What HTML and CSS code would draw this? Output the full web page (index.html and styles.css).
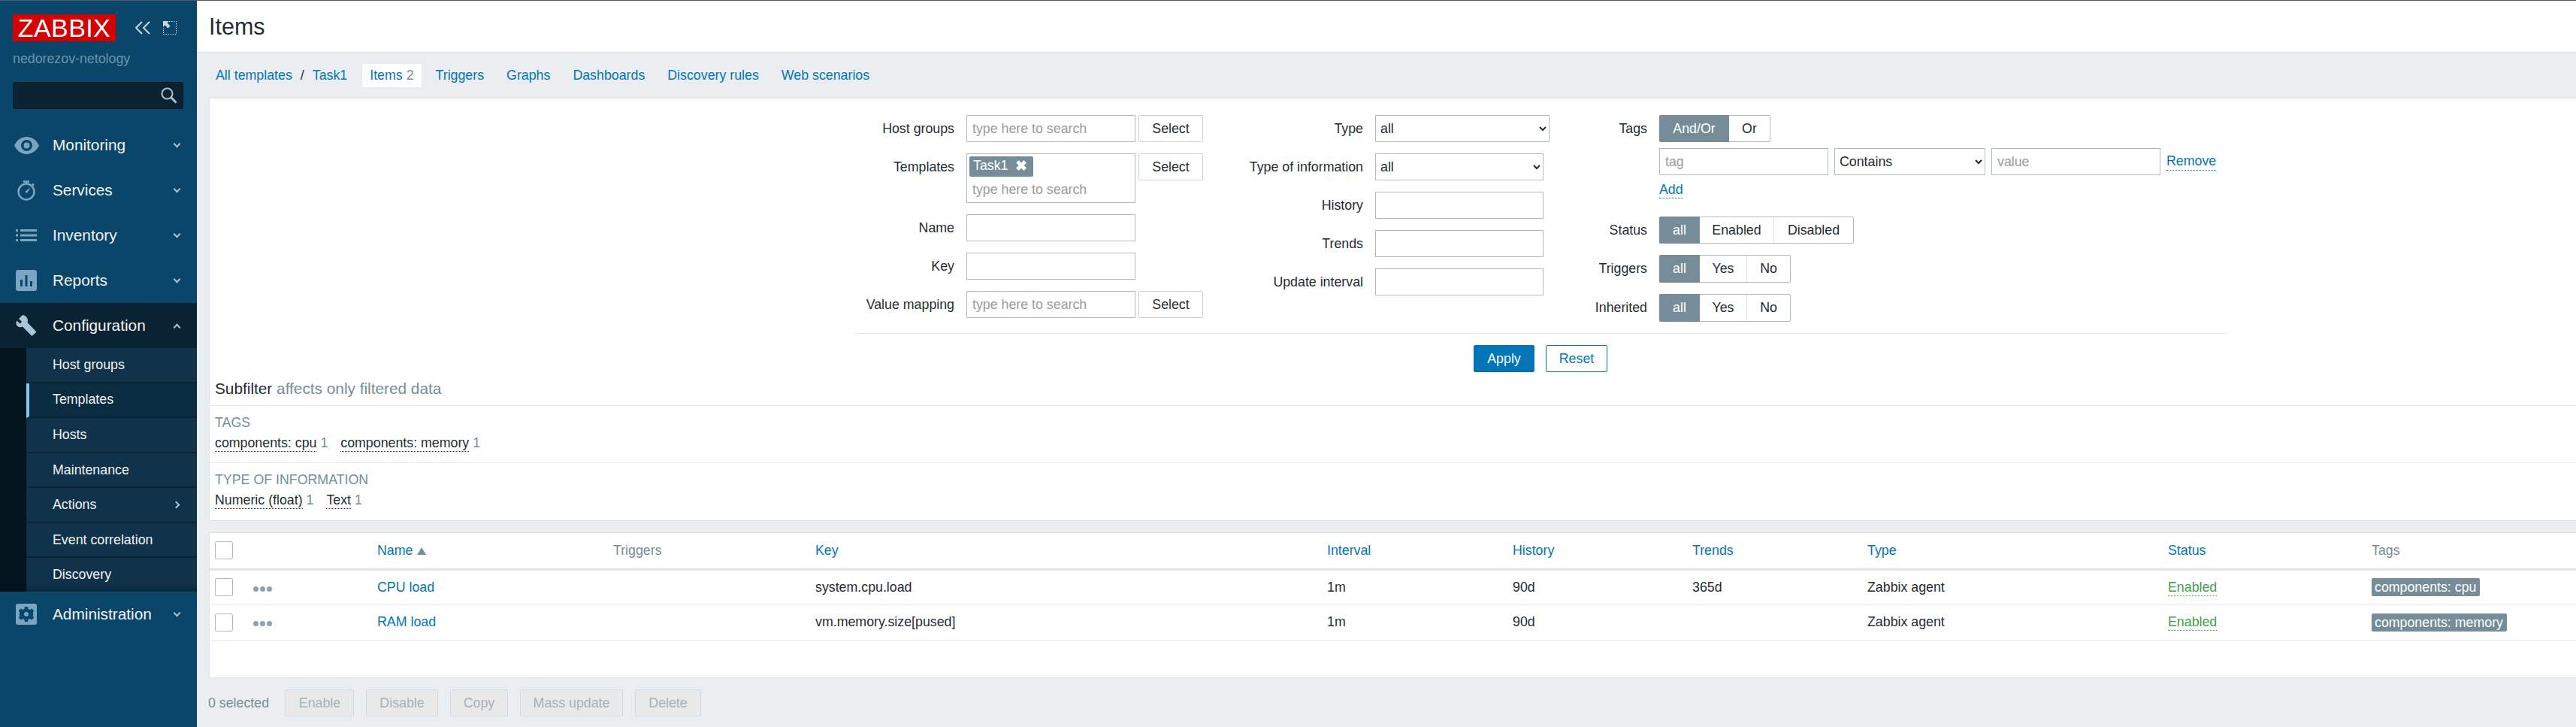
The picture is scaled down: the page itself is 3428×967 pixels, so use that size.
FILE: index.html
```html
<!DOCTYPE html>
<html lang="en">
<head>
  <meta charset="utf-8">
  <title>Items</title>
  <link rel="stylesheet" href="styles.css">
</head>
<body>
  <div class="topline"></div>
  <div class="page">
    <aside class="sidebar">
      <div class="brand">
        <div class="logo">ZABBIX</div>
        <svg class="collapse" width="21" height="18" viewBox="0 0 21 18"><path d="M10 1 2 9l8 8M20 1l-8 8 8 8" fill="none" stroke="#c4d6e2" stroke-width="2"/></svg>
        <svg class="expand" width="18" height="18" viewBox="0 0 18 18"><path d="M8 .5h9.500v17H.5V9" fill="none" stroke="#c4d6e2" stroke-dasharray="1.500 1.500"/><path d="M0 0h8L5.500 2.500 9.500 6.500 6.500 9.500 2.500 5.500 0 8z" fill="#c4d6e2"/></svg>
      </div>
      <div class="server">nedorezov-netology</div>
      <div class="search">
        <input type="text" class="search-input">
        <svg class="search-icon" width="22" height="22" viewBox="0 0 22 22"><circle cx="8.500" cy="8.500" r="7" fill="none" stroke="#a9c0ce" stroke-width="2"/><path d="m13.500 13.500 7 7" stroke="#a9c0ce" stroke-width="3"/></svg>
      </div>
      <nav>
        <a class="nav-item">
          <span class="nav-icon"><svg width="33" height="23" viewBox="0 0 33 23"><path fill-rule="evenodd" d="M16.500 0C24 0 30 5 33 11.500 30 18 24 23 16.500 23S3 18 0 11.500C3 5 9 0 16.500 0zm0 4a7.500 7.500 0 1 0 0 15 7.500 7.500 0 0 0 0-15zm0 3.500a4 4 0 1 1 0 8 4 4 0 0 1 0-8z" fill="#7ba5bf"/></svg></span>
          <span class="nav-label">Monitoring</span><i class="chev"></i>
        </a>
        <a class="nav-item">
          <span class="nav-icon"><svg width="24" height="27" viewBox="0 0 24 27"><g fill="none" stroke="#7ba5bf" stroke-width="2.500"><circle cx="12" cy="15" r="10.500"/><path d="M8 1.500h8M12 1.500v3M20 4.500l2 2"/></g><path d="m18 9-5 8-3-2z" fill="#7ba5bf"/></svg></span>
          <span class="nav-label">Services</span><i class="chev"></i>
        </a>
        <a class="nav-item">
          <span class="nav-icon"><svg width="28" height="16" viewBox="0 0 28 16"><path d="M0 0h3v3H0zM0 6.500h3v3H0zM0 13h3v3H0zM6 0h22v3H6zM6 6.500h22v3H6zM6 13h22v3H6z" fill="#7ba5bf"/></svg></span>
          <span class="nav-label">Inventory</span><i class="chev"></i>
        </a>
        <a class="nav-item">
          <span class="nav-icon"><svg width="28" height="28" viewBox="0 0 28 28"><path fill-rule="evenodd" d="M3 0h22a3 3 0 0 1 3 3v22a3 3 0 0 1-3 3H3a3 3 0 0 1-3-3V3a3 3 0 0 1 3-3zm3 13v9h3v-9zm6.500-6v15h3V7zM19 15v7h3v-7z" fill="#7ba5bf"/></svg></span>
          <span class="nav-label">Reports</span><i class="chev"></i>
        </a>
        <a class="nav-item active">
          <span class="nav-icon"><svg width="28" height="28" viewBox="0 0 28 28"><path d="M9 0 4 5l4 4-2.500 2.500-4-4C0 10 0 13 2.500 15c2 1.500 4.500 1.500 6.500.5L21.500 28l6-5.500L15.500 10c1-2.500.5-5-1.500-7.500C12.500 1 11 .3 9 0z" fill="#a9c6d8"/></svg></span>
          <span class="nav-label">Configuration</span><i class="chev up"></i>
        </a>
        <ul class="submenu">
          <li class="sub-item">Host groups</li>
          <li class="sub-item selected">Templates</li>
          <li class="sub-item">Hosts</li>
          <li class="sub-item">Maintenance</li>
          <li class="sub-item">Actions<i class="chev right"></i></li>
          <li class="sub-item">Event correlation</li>
          <li class="sub-item last">Discovery</li>
        </ul>
        <a class="nav-item">
          <span class="nav-icon"><svg width="28" height="28" viewBox="0 0 28 28"><rect width="28" height="28" rx="3" fill="#7ba5bf"/><path fill-rule="evenodd" d="M12 4h4l.6 3 2.200 1 2.600-1.600 2.800 2.800L22.600 12l.9 2-.9 2 1.600 2.800-2.800 2.800-2.600-1.600-2.200 1-.6 3h-4l-.6-3-2.200-1-2.600 1.600-2.800-2.800L5.400 16l-.9-2 .9-2-1.600-2.800 2.800-2.800L9.200 8l2.200-1zm2 7a3 3 0 1 0 0 6 3 3 0 0 0 0-6z" fill="#0a466a"/></svg></span>
          <span class="nav-label">Administration</span><i class="chev"></i>
        </a>
      </nav>
    </aside>

    <main class="content">
      <header class="page-head"><h1>Items</h1></header>

      <div class="subnav">
        <a class="crumb">All templates</a>
        <span class="crumb-sep">/</span>
        <a class="crumb">Task1</a>
        <a class="tab current">Items <span class="count">2</span></a>
        <a class="tab">Triggers</a>
        <a class="tab">Graphs</a>
        <a class="tab">Dashboards</a>
        <a class="tab">Discovery rules</a>
        <a class="tab">Web scenarios</a>
      </div>

      <section class="box filter">
        <div class="filter-form">
          <div class="filter-col col-a">
            <label>Host groups</label>
            <div class="multi"><input class="field" placeholder="type here to search"><button class="btn-select">Select</button></div>
            <label>Templates</label>
            <div class="multi">
              <div class="field picker">
                <span class="chip">Task1 <b class="chip-x">✖</b></span>
                <span class="hint">type here to search</span>
              </div>
              <button class="btn-select">Select</button>
            </div>
            <label>Name</label>
            <div class="multi"><input class="field"></div>
            <label>Key</label>
            <div class="multi"><input class="field"></div>
            <label>Value mapping</label>
            <div class="multi"><input class="field" placeholder="type here to search"><button class="btn-select">Select</button></div>
          </div>

          <div class="filter-col col-b">
            <label>Type</label>
            <select class="field wide"><option>all</option></select>
            <label>Type of information</label>
            <select class="field narrow"><option>all</option></select>
            <label>History</label>
            <input class="field narrow">
            <label>Trends</label>
            <input class="field narrow">
            <label>Update interval</label>
            <input class="field narrow">
          </div>

          <div class="filter-col col-c">
            <label>Tags</label>
            <div class="radio"><span class="on seg-andor">And/Or</span><span class="seg-or">Or</span></div>
            <span></span>
            <div class="tag-row">
              <input class="field tag-in" placeholder="tag">
              <select class="field tag-op"><option>Contains</option></select>
              <input class="field tag-in" placeholder="value">
              <a class="dotted">Remove</a>
            </div>
            <span></span>
            <div class="add-row"><a class="dotted">Add</a></div>
            <label>Status</label>
            <div class="radio"><span class="on seg-all">all</span><span class="seg-en">Enabled</span><span class="seg-dis">Disabled</span></div>
            <label>Triggers</label>
            <div class="radio tall"><span class="on seg-all">all</span><span class="seg-yes">Yes</span><span class="seg-no">No</span></div>
            <label>Inherited</label>
            <div class="radio tall"><span class="on seg-all">all</span><span class="seg-yes">Yes</span><span class="seg-no">No</span></div>
          </div>
        </div>
        <div class="filter-actions">
          <button class="btn-apply">Apply</button>
          <button class="btn-reset">Reset</button>
        </div>

        <div class="sub-head">Subfilter <span class="muted">affects only filtered data</span></div>
        <div class="sub-group">
          <div class="sub-title">TAGS</div>
          <div class="sub-values"><span><a class="dotted dark">components: cpu</a> <span class="muted">1</span></span><span><a class="dotted dark">components: memory</a> <span class="muted">1</span></span></div>
        </div>
        <div class="sub-group end">
          <div class="sub-title">TYPE OF INFORMATION</div>
          <div class="sub-values"><span><a class="dotted dark">Numeric (float)</a> <span class="muted">1</span></span><span><a class="dotted dark">Text</a> <span class="muted">1</span></span></div>
        </div>
      </section>

      <section class="box listing">
        <table class="items">
          <colgroup>
            <col class="c-check"><col class="c-dots"><col class="c-name"><col class="c-trig"><col class="c-key"><col class="c-int"><col class="c-hist"><col class="c-trend"><col class="c-type"><col class="c-stat"><col class="c-tags">
          </colgroup>
          <thead>
            <tr>
              <th><span class="check"></span></th>
              <th></th>
              <th><a>Name</a> <span class="sort"></span></th>
              <th class="plain">Triggers</th>
              <th><a>Key</a></th>
              <th><a>Interval</a></th>
              <th><a>History</a></th>
              <th><a>Trends</a></th>
              <th><a>Type</a></th>
              <th><a>Status</a></th>
              <th class="plain">Tags</th>
            </tr>
          </thead>
          <tbody>
            <tr>
              <td><span class="check"></span></td>
              <td><span class="dots"><i></i><i></i><i></i></span></td>
              <td><a>CPU load</a></td>
              <td></td>
              <td>system.cpu.load</td>
              <td>1m</td>
              <td>90d</td>
              <td>365d</td>
              <td>Zabbix agent</td>
              <td><a class="dotted green">Enabled</a></td>
              <td><span class="tag">components: cpu</span></td>
            </tr>
            <tr>
              <td><span class="check"></span></td>
              <td><span class="dots"><i></i><i></i><i></i></span></td>
              <td><a>RAM load</a></td>
              <td></td>
              <td>vm.memory.size[pused]</td>
              <td>1m</td>
              <td>90d</td>
              <td></td>
              <td>Zabbix agent</td>
              <td><a class="dotted green">Enabled</a></td>
              <td><span class="tag">components: memory</span></td>
            </tr>
          </tbody>
        </table>
      </section>

      <footer class="actions">
        <span class="selected-count">0 selected</span>
        <button disabled class="act-enable">Enable</button>
        <button disabled class="act-disable">Disable</button>
        <button disabled class="act-copy">Copy</button>
        <button disabled class="act-mass">Mass update</button>
        <button disabled class="act-delete">Delete</button>
      </footer>
    </main>
  </div>
</body>
</html>
```

FILE: styles.css
```css
* { box-sizing: border-box; }

html, body {
  margin: 0;
  height: 967px;
  overflow: hidden;
}
body {
  background: #ebeef0;
  color: #1f2c33;
  font: 17.8px "Liberation Sans", Arial, sans-serif;
}
a { color: #0275b8; }
button, input, select { font: inherit; color: inherit; }

.topline { height: 1px; background: #555b5f; }
.page { display: flex; height: 966px; }

/* sidebar */
.sidebar {
  width: 262px;
  flex: none;
  background: #0a466a;
  color: #f2f2f2;
}
.brand {
  display: flex;
  align-items: center;
  height: 36px;
  margin: 18px 0 0 17px;
}
.logo {
  width: 137px;
  height: 36px;
  background: #d40000;
  color: #fff;
  font-size: 34px;
  line-height: 37px;
  letter-spacing: .4px;
  text-align: center;
}
.collapse { margin-left: 25px; }
.expand { margin-left: 17px; }
.server {
  margin: 13px 0 0 17px;
  height: 20px;
  line-height: 20px;
  color: #6f93ab;
}
.search {
  position: relative;
  margin: 21px 18px 0 17px;
  height: 36px;
}
.search-input {
  width: 100%;
  height: 36px;
  background: #0a2332;
  border: 1px solid #051824;
  border-radius: 3px;
}
.search-icon { position: absolute; top: 7px; right: 8px; }

nav { margin-top: 18px; }
.nav-item {
  display: flex;
  align-items: center;
  height: 60px;
  color: #f2f2f2;
  font-size: 20.8px;
  padding-right: 23px;
}
.nav-item.active { background: #0a2332; }
.nav-icon {
  width: 70px;
  flex: none;
  display: flex;
  justify-content: center;
}
.nav-label { flex: 1; }

.chev {
  display: block;
  width: 7px;
  height: 7px;
  border-right: 2px solid #a9c0ce;
  border-bottom: 2px solid #a9c0ce;
  transform: rotate(45deg);
  margin-top: -3px;
}
.chev.up { transform: rotate(225deg); margin-top: 5px; }
.chev.right { transform: rotate(-45deg); margin-top: 0; margin-right: 24px; }

.submenu {
  list-style: none;
  margin: 0;
  padding: 0 0 0 35px;
  height: 324px;
  display: flex;
  flex-direction: column;
  background: #03141d;
}
.sub-item {
  flex: 1;
  display: flex;
  align-items: center;
  justify-content: space-between;
  padding-left: 35px;
  background: #10324a;
  border-bottom: 2px solid #0a2332;
}
.sub-item.selected {
  background: #0a2c40;
  border-left: 4px solid #84c8f5;
  padding-left: 31px;
}
.sub-item.last {
  border-bottom: 0;
  background: linear-gradient(#10324a 70%, #0c2a3e);
}

/* main column */
.content {
  flex: 1;
  min-width: 0;
  padding-left: 16px;
}
.page-head {
  height: 69px;
  margin-left: -16px;
  padding-left: 16px;
  background: #fff;
  border-bottom: 1px solid #dfe4e7;
  display: flex;
  align-items: center;
}
h1 {
  margin: 0;
  font-size: 30.5px;
  font-weight: normal;
}
.subnav {
  display: flex;
  align-items: center;
  height: 60px;
  padding-left: 9px;
}
.crumb-sep { margin: 0 11px; color: #1f2c33; }
.crumb + .tab { margin-left: 20px; }
.tab {
  height: 31px;
  line-height: 31px;
  padding: 0 11px;
  margin-right: 8px;
}
.tab.current {
  padding: 0 10px;
  background: #fff;
  box-shadow: 0 0 2px #dfe4e7;
  border-radius: 2px;
}
.count { color: #768d99; }

.box {
  background: #fff;
  border: 1px solid #dfe4e7;
  border-width: 1px 0 1px 1px;
}

/* filter */
.filter-form {
  display: flex;
  margin-left: 858px;
  padding: 22px 0 15px;
  width: 1827px;
  border-bottom: 1px solid #e8ebed;
}
.filter-col {
  display: grid;
  column-gap: 16px;
  row-gap: 15px;
  align-content: start;
}
.filter-col label { text-align: right; line-height: 36px; }
.col-a { grid-template-columns: 133px 315px; }
.col-b { grid-template-columns: 197px 232px; margin-left: 16px; }
.col-c { grid-template-columns: 124px auto; margin-left: 6px; }

.multi { display: flex; gap: 4px; align-items: flex-start; }
.field {
  display: block;
  height: 36px;
  width: 225px;
  padding: 0 7px;
  background: #fff;
  border: 1px solid #acbbc2;
  border-radius: 0;
  outline: 0;
}
.field::placeholder, .hint { color: #9b9b9b; opacity: 1; }
select.field { padding: 0 2px; }
.wide { width: 232px; }
.narrow { width: 224px; }
.picker {
  height: 66px;
  padding: 3px;
}
.chip {
  display: block;
  width: 85px;
  height: 27px;
  line-height: 25px;
  padding-left: 5px;
  background: #768d99;
  color: #fff;
  border-radius: 2px;
  white-space: nowrap;
}
.chip-x { font-size: 19px; margin-left: 5px; line-height: 20px; vertical-align: -1px; }
.hint { display: block; margin: 7px 0 0 4px; }
.btn-select {
  width: 86px;
  height: 36px;
  padding: 0;
  background: #fff;
  border: 1px solid #c9d4d9;
  border-radius: 2px;
}

.radio {
  display: flex;
  height: 36px;
  line-height: 34px;
  width: max-content;
  background: #fff;
  border: 1px solid #acbbc2;
  border-radius: 2px;
}
.radio.tall { height: 37px; }
.radio span { text-align: center; border-right: 1px solid #dfe4e7; }
.radio span:last-child { border-right: 0; }
.radio .on {
  background: #768d99;
  color: #fff;
  margin: -1px 0 -1px -1px;
  height: calc(100% + 2px);
  line-height: 36px;
  border-radius: 2px 0 0 2px;
  border: 0;
}
.seg-andor { width: 93px; }
.seg-or { width: 54px; }
.seg-all { width: 54px; }
.seg-en { width: 99px; }
.seg-dis { width: 105px; }
.seg-yes { width: 63px; }
.seg-no { width: 57px; }

.tag-row {
  display: flex;
  align-items: center;
  gap: 8px;
  margin-top: -7px;
}
.tag-op { width: 201px; }
.add-row {
  margin-top: -6px;
  margin-bottom: 10px;
  height: 21px;
  line-height: 21px;
}

.dotted { border-bottom: 1px dotted currentColor; padding-bottom: 1px; }
.dark { color: #1f2c33; }
.green { color: #429e47; }

.filter-actions {
  display: flex;
  gap: 15px;
  margin: 15px 0 0 1682px;
  height: 36px;
}
.btn-apply, .btn-reset {
  height: 36px;
  width: 81px;
  padding: 0;
  border: 1px solid #0275b8;
  border-radius: 2px;
}
.btn-apply { background: #0275b8; color: #fff; }
.btn-reset { background: #fff; color: #0275b8; width: 82px; }

/* subfilter */
.sub-head {
  height: 45px;
  padding: 3px 0 0 7px;
  line-height: 38px;
  font-size: 20.8px;
  border-bottom: 1px solid #e8ebed;
}
.muted { color: #768d99; }
.sub-group {
  height: 76px;
  padding: 12px 0 0 7px;
  border-bottom: 1px solid #e8ebed;
}
.sub-group.end { border-bottom: 0; }
.sub-title { color: #768d99; line-height: 20px; }
.sub-values { display: flex; gap: 17px; margin-top: 7px; line-height: 20px; }

/* list */
.listing { margin-top: 15px; height: 194px; }
.items {
  width: 3149px;
  table-layout: fixed;
  border-collapse: collapse;
}
.c-check { width: 51px; }
.c-dots { width: 165px; }
.c-name { width: 314px; }
.c-trig { width: 269px; }
.c-key { width: 681px; }
.c-int { width: 247px; }
.c-hist { width: 239px; }
.c-trend { width: 233px; }
.c-type { width: 400px; }
.c-stat { width: 271px; }
.c-tags { width: 279px; }
th, td {
  padding: 0 7px;
  text-align: left;
  font-weight: normal;
  vertical-align: middle;
}
thead tr { height: 48px; border-bottom: 3px solid #dfe4e7; }
tbody tr { height: 47px; border-bottom: 1px solid #e8ebed; }
th.plain { color: #768d99; }
.check {
  display: block;
  width: 24px;
  height: 24px;
  background: #fff;
  border: 1px solid #acbbc2;
  border-radius: 2px;
}
.sort {
  display: inline-block;
  border: 6px solid transparent;
  border-top: 0;
  border-bottom: 10px solid #768d99;
  margin-left: 1px;
}
.dots {
  display: flex;
  gap: 2px;
  margin: 4px 0 0 0;
}
.dots i {
  width: 7px;
  height: 7px;
  border-radius: 50%;
  background: #8ea1ac;
}
.tag {
  display: inline-block;
  height: 24px;
  line-height: 24px;
  padding: 0 5px 0 4px;
  background: #768d99;
  color: #fff;
  border-radius: 2px;
  vertical-align: middle;
}

/* footer */
.actions {
  display: flex;
  align-items: center;
  margin-top: 15px;
  height: 36px;
  gap: 16px;
}
.selected-count { color: #768d99; width: 87px; margin-left: -1px; }
.actions button {
  height: 36px;
  padding: 0;
  background: #e9e9e9;
  color: #a5b3ba;
  border: 1px solid #d5dcdf;
  border-radius: 2px;
}
.act-enable { width: 91px; }
.act-disable { width: 96px; }
.act-copy { width: 77px; }
.act-mass { width: 137px; }
.act-delete { width: 88px; }
```
